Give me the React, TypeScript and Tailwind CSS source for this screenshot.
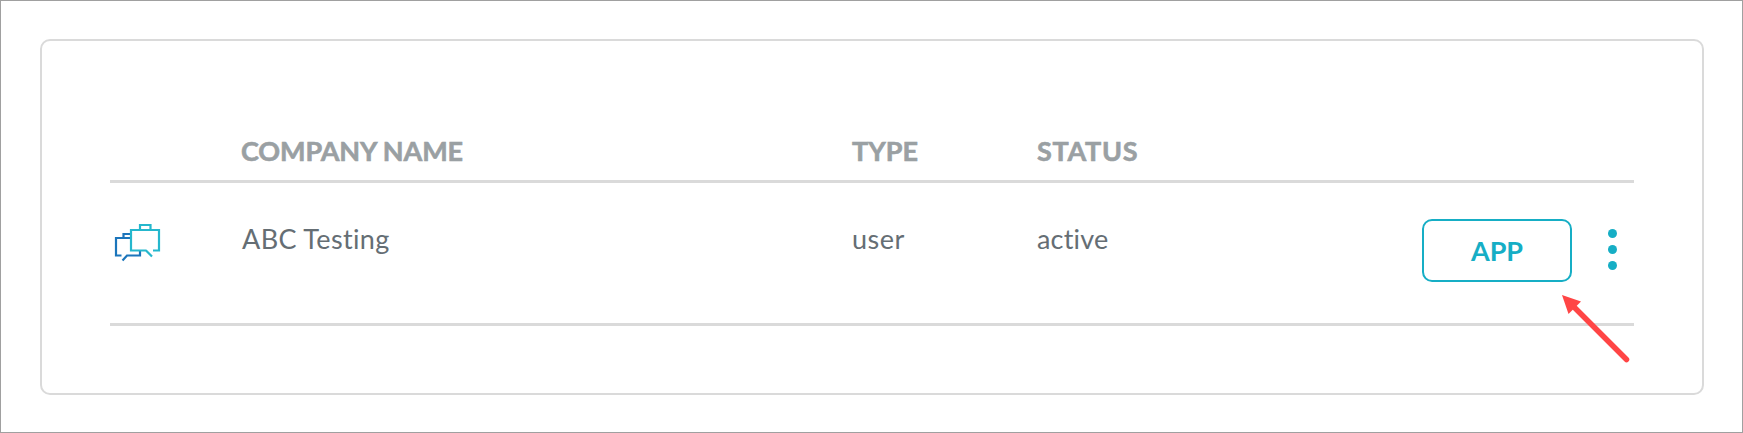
function CompanyIcon() {
  return (
    <svg className="mt-[4px] ml-[4px] h-[39px] w-[48px]" viewBox="114 223 48 39" fill="none" strokeWidth="2.2">
      <path d="M130 234H123.500V238M131 238H116V255.500H121.500M122.500 260.500L127 255.500H140V251" stroke="#1b75bb" />
      <path d="M140 230V225H150.500V230M146.500 250.500H131V230H159V250.500H153M146 250.500L152 256.500" stroke="#25b7cd" />
    </svg>
  );
}

function MoreDots() {
  return (
    <div className="mt-[10px] ml-[36px] flex w-[9px] flex-col gap-[7px]">
      <span className="size-[9px] rounded-full bg-[#16aec5]" />
      <span className="size-[9px] rounded-full bg-[#16aec5]" />
      <span className="size-[9px] rounded-full bg-[#16aec5]" />
    </div>
  );
}

const columns = "grid grid-cols-[132px_610px_185px_385px_212px]";

export default function App() {
  return (
    <main className="relative h-[433px] w-[1743px] border border-[#a0a0a0] bg-white pt-[38px] pl-[39px] font-['Lato',sans-serif] [font-variant-ligatures:none]">
      <section className="h-[356px] w-[1664px] rounded-[10px] border-2 border-[#dadada] px-[68px] pt-[92px]">
        <div className={`${columns} h-[50px] border-b-3 border-[#dadada] text-[27px] leading-[36px] font-bold whitespace-nowrap text-[#9aa0a3] [-webkit-text-stroke:0.6px_#9aa0a3]`}>
          <span />
          <span className="-ml-px tracking-[-0.1px]">COMPANY NAME</span>
          <span>TYPE</span>
          <span className="tracking-[0.7px]">STATUS</span>
          <span />
        </div>
        <div className={`${columns} h-[143px] border-b-3 border-[#dadada] pt-[36px] text-[27px] leading-[40px] whitespace-nowrap text-[#656e74]`}>
          <CompanyIcon />
          <span className="tracking-[0.35px]">ABC Testing</span>
          <span className="tracking-[0.5px]">user</span>
          <span className="tracking-[0.2px]">active</span>
          <div className="flex items-start">
            <button className="h-[63px] w-[150px] rounded-[10px] border-2 border-[#16aec5] text-[27px] font-bold text-[#16aec5]">
              APP
            </button>
            <MoreDots />
          </div>
        </div>
      </section>
      <svg className="absolute top-[293px] left-[1560px] h-[71px] w-[70px]" viewBox="1561 294 70 71">
        <path d="M1562 295L1581 301.500L1568.500 314Z" fill="#ff4545" />
        <path d="M1573.500 306.500L1626.500 359.500" stroke="#ff4545" strokeWidth="5.500" strokeLinecap="round" />
      </svg>
    </main>
  );
}
